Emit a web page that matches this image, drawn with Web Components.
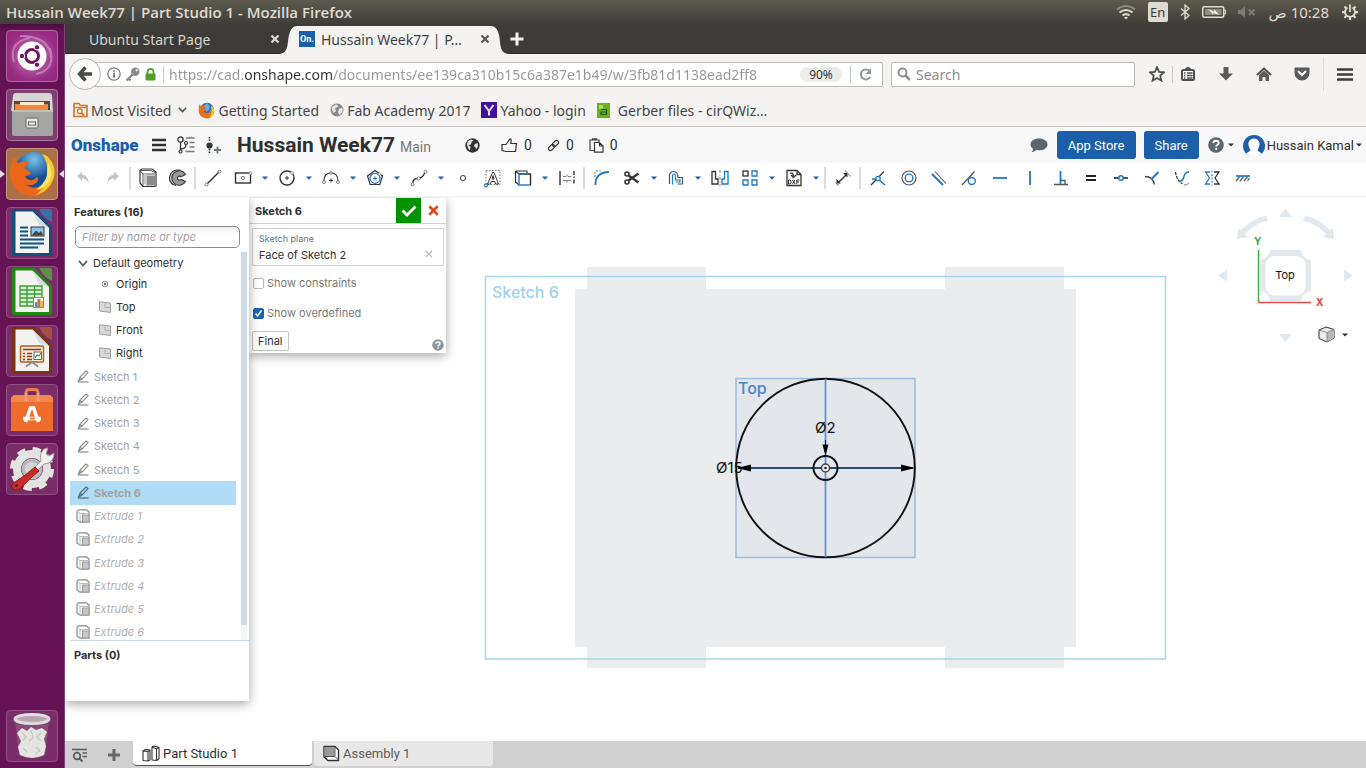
<!DOCTYPE html>
<html lang="en">
<head>
<meta charset="utf-8">
<title>Hussain Week77 | Part Studio 1</title>
<style>
html,body{margin:0;height:100%}
body{font-family:Roboto,"Liberation Sans",sans-serif;font-size:14px;color:#2f2f2f;background:#fff;overflow:hidden}
</style>
</head>
<body>
<desktop-shell></desktop-shell>
<script>
const BASE = `*{box-sizing:border-box}button,input{font:inherit;color:inherit;margin:0}
button{border:0;padding:0;background:none;display:inline-flex;align-items:center;justify-content:center}
a{color:inherit;text-decoration:none}ul{list-style:none;margin:0;padding:0}`;
function define(tag, css, html) {
  customElements.define(tag, class extends HTMLElement {
    constructor() {
      super();
      const body = typeof html === 'function' ? html(this) : html;
      this.attachShadow({mode: 'open'}).innerHTML = `<style>${BASE}${css}</style>${body}`;
    }
  });
}

/* ---------- icon set: name -> [width, height, markup] ---------- */
const D = '#333', B = '#1f78c8';
const tile = (a, b) => `<rect x=".5" y=".5" width="51" height="51" rx="3.5" fill="${a}" stroke="${b}"/>`;
const office = (c, dk, inner) => tile('#7a2d69', '#8f4f82') +
  `<path d="M8 2H28L46 20V47a2 2 0 0 1-2 2H8a2 2 0 0 1-2-2V4a2 2 0 0 1 2-2Z" fill="${dk}"/><path d="M33 2H44a2 2 0 0 1 2 2V15Q38 12 33 2Z" fill="${c}" opacity=".7"/><path d="M9.500 4.500H26.500L43 21V46H9.500Z" fill="#f3f3f2"/><path d="M26.500 4.500L43 21 33 18Z" fill="#d5dde2"/>${inner}`;
const cubeIcon = (line, face, light) => `<path d="M2 2.500 4 1H14L18 4V18L16 18.500H5L2 15Z" fill="#fff" stroke="${line}" stroke-width="1.200"/><path d="M2 2.500H13L18 5M5 18V6L2 2.500M5 6H17" fill="none" stroke="${line}" stroke-width=".8"/><path d="M8.500 7.500H18V17.500H8.500Z" fill="${face}"/><path d="M6 5.500H8L9 8V17.500L6 16Z" fill="${light}"/>`;
const ICONS = {
  wifi:[20,16,`<g fill="none" stroke-width="2"><path d="M1 5.500Q10-1.500 19 5.500" stroke="#8a887f"/><path d="M3.500 8.500Q10 3.500 16.500 8.500M6.500 11.500Q10 8.800 13.500 11.500" stroke="#dfdbd2"/></g><path d="M8 13.500Q10 12 12 13.500L10 15.500Z" fill="#dfdbd2"/>`],
  bluetooth:[10,16,`<path d="M1 4.500 9 11.500 5 15V1L9 4.500 1 11.500" fill="none" stroke="#dfdbd2" stroke-width="1.300"/>`],
  battery:[24,12,`<rect x=".75" y=".75" width="21" height="10.500" rx="1.500" fill="none" stroke="#dfdbd2" stroke-width="1.500"/><path d="M22 4h1.500v4H22" fill="none" stroke="#dfdbd2"/><rect x="3" y="3" width="16.500" height="6" fill="#8d8b82"/><path d="M6 3 12 5.500 12.500 3.500 17 9 11.500 7 11 8.500Z" fill="#f4f1ea"/>`],
  mute:[18,12,`<path d="M0 4H3L7 0V12L3 8H0Z" fill="#7e7c74"/><path d="M11 3.500 16.500 9M16.500 3.500 11 9" stroke="#7e7c74" stroke-width="1.800"/>`],
  power:[16,16,`<g stroke="#dfdbd2" fill="none"><path d="M5.500 3.600A5 5 0 1 0 10.500 3.600" stroke-width="1.800"/><path d="M8 .5V8" stroke-width="1.800"/><path d="M2.500 2.500 4.500 4.500M13.500 2.500 11.500 4.500M0 8.200H3M13 8.200H16M2.500 13.700 4.500 11.700M13.500 13.700 11.500 11.700M8 13V16" stroke-width="2.200"/></g>`],
  xtab:[10,10,`<path d="M1.500 1.500 8.500 8.500M8.500 1.500 1.500 8.500" stroke="currentColor" stroke-width="2.400"/>`],
  plus:[14,14,`<path d="M7 .5V13.500M.5 7H13.500" stroke="currentColor" stroke-width="3"/>`],
  back:[16,16,`<path d="M8.500 1.500 2.500 8 8.500 14.500M3 8H15" fill="none" stroke="#4b4b4b" stroke-width="3.400"/>`],
  info:[14,14,`<circle cx="7" cy="7" r="6.200" fill="none" stroke="#777" stroke-width="1.200"/><path d="M7 6V10.800M7 3.200V4.800" stroke="#666" stroke-width="1.600"/>`],
  key:[15,15,`<circle cx="10.300" cy="4.700" r="4.200" fill="#8b8b8b"/><circle cx="11.700" cy="3.300" r="1.100" fill="#fff"/><path d="M8.500 6.500 1.500 13.500M3.500 11.500 5.500 13.500" stroke="#8b8b8b" stroke-width="2.400"/>`],
  lock:[11,13,`<path d="M2.500 6V4a3 3 0 0 1 6 0V6" fill="none" stroke="#57a52e" stroke-width="1.800"/><rect x=".5" y="5.500" width="10" height="7" rx="1" fill="#4f9f28"/>`],
  reload:[13,13,`<path d="M10.500 3A5 5 0 1 0 11.200 9" fill="none" stroke="#8b98a3" stroke-width="1.900"/><path d="M12 .5V6H6.500Z" fill="#8b98a3"/>`],
  search:[14,14,`<circle cx="5.500" cy="5.500" r="4" fill="none" stroke="#909090" stroke-width="2"/><path d="M8.500 8.500 12.800 12.800" stroke="#909090" stroke-width="2.600"/>`],
  star:[16,16,`<path d="M8 1.200 10 5.900 15.100 6.300 11.200 9.600 12.400 14.600 8 12 3.600 14.600 4.800 9.600.9 6.300 6 5.900Z" fill="#fff" stroke="#4d4d4d" stroke-width="1.800"/>`],
  clipboard:[14,14,`<path d="M4.500 2.500 7 .5 9.500 2.500" fill="none" stroke="#4d4d4d" stroke-width="2"/><rect x="1" y="3" width="12" height="10" rx="1.500" fill="#fff" stroke="#4d4d4d" stroke-width="2"/><path d="M3 6H4.500M3 8.500H4.500M3 11H4.500M6 6H11.500M6 8.500H11.500M6 11H11.500" stroke="#4d4d4d" stroke-width="1.300"/>`],
  down:[14,14,`<path d="M4.500 0H9.500V6.500H14L7 13.500 0 6.500H4.500Z" fill="#5a5a5a"/>`],
  home:[16,14,`<path d="M1 8 8 1.500 15 8" fill="none" stroke="#4d4d4d" stroke-width="2"/><path d="M3 8 8 3.500 13 8V14H9.500V10H6.500V14H3Z" fill="#5a5a5a"/>`],
  pocket:[16,14,`<path d="M1.500.5H14.500a1 1 0 0 1 1 1V6A7.500 7.500 0 0 1 .5 6V1.500a1 1 0 0 1 1-1Z" fill="#5a5a5a"/><path d="M4.500 4.500 8 8 11.500 4.500" fill="none" stroke="#fff" stroke-width="2" stroke-linecap="round"/>`],
  burger:[16,13,`<path d="M1 1.500H15M1 6.500H15M1 11.500H15" stroke="#3c3c3c" stroke-width="2.600" stroke-linecap="round"/>`],
  folder:[15,16,`<path d="M1 14.500V1.500H6L7.500 3.500H14V14.500Z" fill="#fbe9d5" stroke="#cc7430" stroke-width="1.600"/><path d="M1 5.500H14" stroke="#cc7430" stroke-width="1.200"/><circle cx="6.800" cy="9.200" r="2.300" fill="#fff" stroke="#cc7430" stroke-width="1.300"/><path d="M8.500 11 11 13.500" stroke="#cc7430" stroke-width="1.800"/>`],
  chev:[9,6,`<path d="M.8.8 4.500 4.600 8.200.8" fill="none" stroke="#4d4d4d" stroke-width="1.500"/>`],
  fox:[17,17,`<circle cx="9" cy="7.500" r="6.800" fill="#2a6db4"/><path d="M9 1Q13 4 11 8L8 10 6 4Z" fill="#5fb1e8"/><path d="M1.500 2 3 4.500Q6 3 7.500 4L6 6.500 8.500 8 6 9.500Q8 12 11 10.500 14 8.500 13 3.500 17 6 16 11 14 16.500 8.500 16.500 1.500 16 .7 9 .5 5 1.500 2Z" fill="#e8721c"/><path d="M13 3.500Q17 6 16 11 14.500 15 11 16 15 11 13 3.500Z" fill="#f7c52c"/>`],
  globeg:[14,14,`<circle cx="7" cy="7" r="6.500" fill="#8a8a8a"/><path d="M1.500 5Q4 1.500 7 1.500L8 3.500 5 5.500 6 8 3.500 10ZM9 6 12.500 4.500 12.500 9 9.500 12 8 9Z" fill="#e9e9e9"/>`],
  yahoo:[16,16,`<rect width="16" height="16" fill="#43109b"/><path d="M3.500 3 8 9 12.500 3M8 9V13.500" fill="none" stroke="#e6e0f2" stroke-width="2"/>`],
  gerber:[13,15,`<rect x=".5" y=".5" width="12" height="14" fill="#68b21f" stroke="#888"/><path d="M2 2H6V6H2Z" fill="#a5dd57"/><path d="M4 6.500H9.500V11.500H4V9H9" fill="none" stroke="#1e5b10" stroke-width="1.200"/>`],

  menu:[14,14,`<path d="M0 2H14M0 7H14M0 12H14" stroke="#2f2f2f" stroke-width="2.600"/>`],
  tree:[18,18,`<circle cx="3.500" cy="3.500" r="2.600" fill="none" stroke="${D}" stroke-width="1.300"/><path d="M3.500 6V16M3.500 13Q9 13 9 8.500" fill="none" stroke="${D}" stroke-width="1.300"/><circle cx="9" cy="7" r="1.500" fill="none" stroke="${D}" stroke-width="1.200"/><circle cx="3.500" cy="15.500" r="1.500" fill="#fff" stroke="${D}" stroke-width="1.200"/><path d="M9 2H17.500M12.500 6.500H17.500M12.500 11H17.500M8.500 15.500H17.500" stroke="#777" stroke-width="1.500"/>`],
  insert:[15,17,`<path d="M3.500 0V5M3.500 12V17" stroke="${D}" stroke-width="1.600" stroke-dasharray="1.500 1"/><circle cx="3.500" cy="8.500" r="3.100" fill="${D}"/><path d="M11.500 9.500V16.500M8 13H15" stroke="#68747c" stroke-width="1.800"/>`],
  globe:[15,15,`<circle cx="7.500" cy="7.500" r="7.200" fill="#333"/><path d="M3 3 6 1.500 8.500 2.500 6.500 4 6 6.500 3.500 7 5.500 9 5 12.500 3 10 2 6ZM10 6 12.500 5 13 8 11.500 11 10.500 9.500 9 8Z" fill="#e8e8e8"/>`],
  thumb:[17,15,`<path d="M1 6.500H5L9 .8Q11 1 9.800 5.500H15.500L14.500 13.500H5L1 12.500Z" fill="none" stroke="#333" stroke-width="1.200"/>`],
  link:[13,13,`<g transform="rotate(-45 6.500 6.500)" fill="none" stroke="#333" stroke-width="1.200"><rect x=".2" y="4.500" width="7" height="4" rx="2"/><rect x="5.800" y="4.500" width="7" height="4" rx="2"/></g>`],
  paste:[15,15,`<path d="M5 12.500H1V2H10V4M3.500 2V.8H7.500V2" fill="none" stroke="#444" stroke-width="1.200"/><path d="M5.500 4.500H10.500L14 8V14.200H5.500ZM10.500 4.500V8H14" fill="#fff" stroke="#333" stroke-width="1.200"/>`],
  chat:[18,15,`<path d="M9 .5C14 .5 17.500 3 17.500 6.500S14 12.300 9 12.300Q7.500 12.300 6.500 12 4 14 1.500 14.200 3 12.500 3 10.800.5 9.200.5 6.500C.5 3 4 .5 9 .5Z" fill="#5c666e"/>`],
  help:[16,16,`<circle cx="8" cy="8" r="7.800" fill="#5c666e"/><path d="M5.300 6.200Q5.500 3.800 8 3.800 10.700 3.800 10.700 6 10.700 7.300 9.200 8 8.200 8.500 8.200 9.600M8.200 10.800V12.800" fill="none" stroke="#fff" stroke-width="1.900"/>`],
  helps:[12,12,`<circle cx="6" cy="6" r="5.800" fill="#8e979d"/><path d="M4 4.800Q4 3 6 3 8 3 8 4.700 8 5.700 6.900 6.200 6.100 6.600 6.100 7.400M6.100 8.200V9.600" fill="none" stroke="#fff" stroke-width="1.400"/>`],
  avatar:[22,21,`<clipPath id="c"><circle cx="11" cy="11" r="11"/></clipPath><g clip-path="url(#c)"><rect width="22" height="22" fill="#1b5faa"/><path d="M11 3.500C15 3.500 17 6.500 16.500 10 16.200 12.500 15 14 14.500 15 15 17 19 17 20 21H2C3 17 7 17 7.500 15 7 14 5.800 12.500 5.500 10 5 6.500 7 3.500 11 3.500Z" fill="#fff"/></g>`],
  caret:[6,4,`<path d="M0 .5H6L3 3.500Z" fill="#333"/>`],
  bcaret:[6,4,`<path d="M0 .5H6L3 3.800Z" fill="#1b5faa"/>`],

  undo:[20,20,`<path d="M4 8 9 3.500V6.500Q15.500 7 15.500 15.500 13.500 10.500 9 10.200V13Z" fill="#c4c7c9"/>`],
  redo:[20,20,`<path d="M16 8 11 3.500V6.500Q4.500 7 4.500 15.500 6.500 10.500 11 10.200V13Z" fill="#c4c7c9"/>`],
  extrude:[20,20,cubeIcon('#333','#8b8b8b','#c8c8c8')],
  revolve:[20,20,`<path d="M12.500 2H9A8 8 0 0 0 5 16.500L8 17.500" fill="#ddd" stroke="#333" stroke-width="1.200"/><path d="M17.500 6.500A7.300 7.300 0 1 0 17.500 13.500L13 11.500A2 2 0 1 1 13 8.800Z" fill="#999" stroke="#333" stroke-width="1.100"/>`],
  line:[20,20,`<path d="M4 16 16 4" stroke="${D}" stroke-width="1.400"/><circle cx="3.500" cy="16.500" r="1.500" fill="#fff" stroke="#777"/><circle cx="16.500" cy="3.500" r="1.500" fill="#fff" stroke="#777"/>`],
  rect:[20,20,`<rect x="2.500" y="5" width="15" height="10" fill="none" stroke="${D}" stroke-width="1.400"/><circle cx="10" cy="10" r="1.600" fill="none" stroke="#777"/><circle cx="17.500" cy="5" r="1.400" fill="#fff" stroke="#999"/>`],
  circle:[20,20,`<circle cx="10" cy="10" r="7" fill="none" stroke="${D}" stroke-width="1.400"/><path d="M10 8V12M8 10H12" stroke="${D}"/><circle cx="15" cy="5" r="1.400" fill="#fff" stroke="#999"/>`],
  arc:[20,20,`<path d="M3 13Q3 5 10 5 17 5 17 13" fill="none" stroke="${D}" stroke-width="1.200"/><path d="M10 10.500V14.500M8 12.500H12" stroke="${D}"/><circle cx="3" cy="14" r="1.500" fill="#fff" stroke="#777"/><circle cx="17" cy="14" r="1.500" fill="#fff" stroke="#777"/><circle cx="10" cy="5" r="1.300" fill="#fff" stroke="#777"/>`],
  polygon:[20,20,`<path d="M10 2.500 17.500 8 14.800 16.500H5.200L2.500 8Z" fill="none" stroke="${D}" stroke-width="1.200"/><circle cx="10" cy="10.300" r="5" fill="none" stroke="${B}" stroke-width="1.200"/><path d="M10 8.500V12.500M8 10.500H12" stroke="${B}"/><circle cx="14.500" cy="6" r="1.300" fill="#fff" stroke="#999"/>`],
  spline:[20,20,`<path d="M3.500 16Q4 10.500 8 10.500 13 11 16 4.500" fill="none" stroke="${D}" stroke-width="1.400"/><circle cx="3.500" cy="16.300" r="1.500" fill="#fff" stroke="#777"/><circle cx="9.500" cy="10.500" r="1.500" fill="#fff" stroke="#777"/><circle cx="16.500" cy="3.800" r="1.500" fill="#fff" stroke="#777"/>`],
  point:[20,20,`<circle cx="10" cy="10" r="2.500" fill="#fff" stroke="#555" stroke-width="1.100"/>`],
  text:[20,20,`<rect x="3" y="2.500" width="14" height="14" fill="none" stroke="#777" stroke-dasharray="1.500 1.500"/><path d="M4.500 16 9.500 4.500H11L15.500 16H12.500L11.800 13.500H8.200L7.500 16ZM9 11H11L10 7.500Z" fill="#fff" stroke="${D}"/><circle cx="3" cy="17.300" r="1.500" fill="#fff" stroke="${B}" stroke-width="1.200"/>`],
  use:[20,20,`<path d="M2.500 3H14V5M2.500 3V14L6 17M2.500 3 6 6" fill="none" stroke="${D}" stroke-width="1.200"/><rect x="6" y="6" width="11.500" height="11" fill="#fff" stroke="${B}" stroke-width="1.400"/><path d="M6 6H17.500V17" fill="none" stroke="${D}" stroke-width="1.200"/>`],
  constr:[20,20,`<path d="M3 3V17" stroke="${D}" stroke-width="1.400"/><path d="M17 3V17" stroke="${D}" stroke-width="1.400" stroke-dasharray="4 1.500 1.500 1.500"/><path d="M6 8.500H9M11 8.500H14M6 12.500H14" stroke="#777" stroke-width="1.200"/><path d="M10 6.500V8.500M10 12.500V14.500" stroke="#777"/>`],
  fillet:[20,20,`<path d="M3 9V3H9" fill="none" stroke="#888" stroke-dasharray="2 1.500"/><path d="M3.500 17Q3 4.500 17 4" fill="none" stroke="${B}" stroke-width="1.800"/>`],
  trim:[20,20,`<path d="M6.500 7.500 16.500 14.500M6.500 12.500 16.500 5.500" stroke="${D}" stroke-width="2.200" fill="none"/><circle cx="5" cy="6" r="2" fill="none" stroke="${D}" stroke-width="1.600"/><circle cx="5" cy="14" r="2" fill="none" stroke="${D}" stroke-width="1.600"/>`],
  offset:[20,20,`<path d="M3.500 16V7.500Q3.500 3.500 7.500 3.500 11 3.500 11.500 6.500L12 9.500H16.500V16H11.500" fill="none" stroke="#555" stroke-width="1.200"/><path d="M6.500 16.500V8Q6.500 6 8 6 9.500 6 9.500 9V12H14V14H9.500" fill="none" stroke="${B}" stroke-width="1.200"/>`],
  mirror:[20,20,`<path d="M2 3.500H5.500V11H8V16H2Z" fill="none" stroke="${D}" stroke-width="1.300"/><path d="M18 3.500H14.500V11H12V16H18Z" fill="none" stroke="${B}" stroke-width="1.300"/><path d="M10 2V18" stroke="#888" stroke-dasharray="3 1.500 1 1.500"/>`],
  pattern:[20,20,`<rect x="3" y="3" width="5" height="5" fill="none" stroke="${D}" stroke-width="1.300"/><path d="M12 3H17V8H12ZM3 12H8V17H3ZM12 12H17V17H12Z" fill="none" stroke="${B}" stroke-width="1.300"/>`],
  dxf:[20,20,`<path d="M3 17.500V2.500H13L17 6.500V17.500Z" fill="#fff" stroke="${D}" stroke-width="1.300"/><path d="M13 2.500V6.500H17M6 5.500Q9 4 9.500 8M7 7 9.500 9.500 12 7" fill="none" stroke="${D}" stroke-width="1.300"/><path d="M4.500 12H6L7 13V15L6 16H4.500ZM8.500 12 11 16M11 12 8.500 16M15.500 12H12.800V16M13 14H15" fill="none" stroke="${D}" stroke-width="1"/>`],
  dim:[20,20,`<path d="M6 14 13 7" stroke="${D}" stroke-width="1.500"/><path d="M3.500 11V15.500H8ZM14.500 9.500V5H10Z" fill="${D}"/><path d="M2.500 14.500 5.500 17.500M12 2.500 17.500 8.500" stroke="#888" stroke-width="1.100"/>`],
  coincident:[20,20,`<path d="M3 17 16 3.500" stroke="${D}" stroke-width="1.200"/><path d="M4 11H10L17 17" fill="none" stroke="${B}" stroke-width="1.500"/><circle cx="10" cy="10.500" r="2.200" fill="#fff" stroke="${B}" stroke-width="1.300"/>`],
  concentric:[20,20,`<circle cx="10" cy="10" r="7" fill="none" stroke="#555" stroke-width="1.200"/><circle cx="10" cy="10" r="3.800" fill="none" stroke="${B}" stroke-width="1.300"/>`],
  parallel:[20,20,`<path d="M3 6 14 17" stroke="${B}" stroke-width="2"/><path d="M6 3.500 17 15.500" stroke="#555" stroke-width="1.100"/>`],
  tangent:[20,20,`<path d="M3 17 15.500 3.500" stroke="#555" stroke-width="1.200"/><circle cx="12.800" cy="13" r="3.500" fill="none" stroke="${B}" stroke-width="1.400"/>`],
  horizontal:[20,20,`<path d="M3 10H17" stroke="${B}" stroke-width="1.800"/>`],
  vertical:[20,20,`<path d="M10 3V17" stroke="${B}" stroke-width="1.800"/>`],
  perp:[20,20,`<path d="M9.500 3V16" stroke="${B}" stroke-width="1.800"/><path d="M3 16.500H17M10 12.500H14V16" fill="none" stroke="#555" stroke-width="1.300"/>`],
  equal:[20,20,`<path d="M5 8H15M5 12H15" stroke="#222" stroke-width="2"/>`],
  midpoint:[20,20,`<path d="M3 10H17" stroke="${D}" stroke-width="1.700"/><circle cx="10" cy="10" r="2.200" fill="#fff" stroke="${B}" stroke-width="1.400"/>`],
  normal:[20,20,`<path d="M3 8.500Q11 8.500 12.500 16.500" fill="none" stroke="#444" stroke-width="1.300"/><path d="M9 11.500 16.500 4" stroke="${B}" stroke-width="2"/>`],
  pierce:[20,20,`<path d="M3.500 4Q4.500 12 10.500 16" fill="none" stroke="${D}" stroke-width="1.200" stroke-dasharray="3 1"/><path d="M7 13.500Q11 13 12 8.500 13 4 17 4" fill="none" stroke="${B}" stroke-width="1.500"/><path d="M12 17Q15 17.500 17 15" fill="none" stroke="#777"/>`],
  symmetric:[20,20,`<path d="M8 4H3.500L7.500 10 3.500 16H8" fill="none" stroke="${B}" stroke-width="1.300"/><path d="M12 4H17L13 10 17 16H12" fill="none" stroke="${D}" stroke-width="1.300"/><path d="M10 2.500V17.500" stroke="${B}" stroke-dasharray="2 1.500"/>`],
  fix:[20,20,`<path d="M3 8H17" stroke="${B}" stroke-width="1.700"/><path d="M3 13 6.500 9M7 13 10.500 9M11 13 14.500 9M14.500 13 16.500 10" stroke="#555" stroke-width="1.200"/>`],

  origin:[8,8,`<circle cx="4" cy="4" r="2.800" fill="none" stroke="#888"/><circle cx="4" cy="4" r="1.100" fill="#444"/>`],
  plane:[12,12,`<path d="M.5.800 11.500 2V11.500L.5 10Z" fill="#d9d9d9" stroke="#a0a0a0"/><path d="M6 1.500V6.500H11" fill="none" stroke="#b0b0b0"/>`],
  pencil:[13,13,`<path d="M1 12H11.500" stroke="currentColor" stroke-width="1.200"/><path d="M1.500 11 3 7 9 1 11 2.500 5 9ZM3 7 5 9" fill="none" stroke="currentColor" stroke-width="1.100"/>`],
  box:[14,14,`<path d="M1 2 3 .8H10.500L13 3V13L4 13.200 1 11Z" fill="#fff" stroke="#888" stroke-width="1.200"/><path d="M1 2 4 4.500V13M4 4.500H13" fill="none" stroke="#bbb"/><rect x="6.500" y="6" width="6.500" height="7" fill="#c6c6c6" stroke="#999"/>`],
  down2:[10,7,`<path d="M1 1 5 5.500 9 1" fill="none" stroke="#555" stroke-width="1.800"/>`],
  check:[16,12,`<path d="M1.500 5.500 6 10 14.500 1.500" fill="none" stroke="#fff" stroke-width="2.800"/>`],
  redx:[11,11,`<path d="M1.300 1.300 9.700 9.700M9.700 1.300 1.300 9.700" stroke="#e0481e" stroke-width="2.700"/>`],
  greyx:[8,8,`<path d="M1 1 7 7M7 1 1 7" stroke="#b8b8b8" stroke-width="1.200"/>`],
  cube:[17,17,`<path d="M1 4 8 1 16 3.500V12L9 16 1 12.500Z" fill="#e9e9e9" stroke="#333"/><path d="M9 6.500 16 3.500V12L9 16Z" fill="#b9b9b9"/><path d="M1 4 9 6.500 16 3.500M9 6.500V16" fill="none" stroke="#777" stroke-width=".8"/>`],
  manager:[16,14,`<path d="M0 1.500H15M10.500 5H15M10.500 8.500H15" stroke="#5a5a5a" stroke-width="1.600"/><circle cx="5" cy="8" r="3.300" fill="none" stroke="#5a5a5a" stroke-width="1.700"/><path d="M7.500 10.500 10.500 13.500" stroke="#5a5a5a" stroke-width="1.900"/>`],
  plusg:[12,12,`<path d="M6 0V12M0 6H12" stroke="#666" stroke-width="3"/>`],
  studio:[18,17,`<path d="M1 6 3 4.500 8 5V15L6 16 1 15.500ZM1 6 6 6.500 8 5M6 6.500V16" fill="#fff" stroke="#333" stroke-width="1.100"/><path d="M10 2 12 1 17 2.500V13.500L15 15.500 10 15ZM10 2 14.500 4 17 2.500M14.500 4V15.500" fill="#fff" stroke="#333" stroke-width="1.100"/>`],
  assembly:[17,17,`<path d="M1 1.500H12L15.500 5V15.500H5L1 12Z" fill="#fff" stroke="#333" stroke-width="1.400"/><rect x="1.500" y="2" width="10" height="9.500" fill="#999"/><path d="M12 2V11.500H1.500M12 11.500 15.500 15" fill="none" stroke="#555"/>`],

  dash:[52,52,`<defs><radialGradient id="g"><stop offset="0" stop-color="#d89bcb"/><stop offset=".6" stop-color="#a94c99"/><stop offset="1" stop-color="#962a80"/></radialGradient></defs>${tile('url(#g)','#b368a6')}<path d="M8 32Q2 12 24 8M44 18Q50 40 30 44M14 6Q44 6 45 28" fill="none" stroke="#d6a1cc" stroke-width="2" opacity=".6"/><circle cx="26" cy="26" r="14.500" fill="#fff"/><circle cx="26" cy="26" r="6.500" fill="none" stroke="#75145f" stroke-width="3"/><g fill="#75145f" stroke="#fff"><circle cx="16" cy="26" r="2.700"/><circle cx="31" cy="17.300" r="2.700"/><circle cx="31" cy="34.700" r="2.700"/></g>`],
  files:[52,52,`${tile('#80406f','#a77c9d')}<path d="M7 7Q7 4 10 4H43Q46 4 46 7L47 22H5Z" fill="#d5d5d3"/><path d="M8 12H44V22H8Z" fill="#5c4632"/><path d="M9 15H42V22H9Z" fill="#f08a3c"/><path d="M14 13H38V16H14Z" fill="#fbe8d4"/><rect x="6" y="21" width="41" height="26" rx="2" fill="#a5a5a3"/><path d="M6 22H47" stroke="#d9d9d9"/><rect x="20" y="29" width="12" height="10" rx="1" fill="#e5e5e3" stroke="#666"/><rect x="22.500" y="33" width="7" height="3" fill="#fff" stroke="#555"/>`],
  firefox:[52,52,`<defs><radialGradient id="b" cx=".5" cy=".2"><stop offset="0" stop-color="#7cc5ea"/><stop offset="1" stop-color="#174f93"/></radialGradient></defs>${tile('#aa7047','#c59d7e')}<circle cx="28" cy="23" r="19" fill="url(#b)"/><path d="M8 9 12 15Q19 12 23 14L18 20 25 25Q23 28 19 28 21 33 27 32L31 29Q34 31 30 35 25 39 20 36 27 43 36 37 44 30 42 19 42 14 39 10 50 17 48 30 44 47 26 48 6 46 4 27 4 15 8 9Z" fill="#e9661b"/><path d="M41 8Q52 19 47 32 42 44 30 47 42 38 41 24 42 14 36 6Z" fill="#f8c933"/><path d="M42 14Q48 25 43 34 38 41 30 42 38 36 41 28Z" fill="#fbe56a"/>`],
  writer:[52,52,office('#1f8dc0','#0e4f7e',`<path d="M14 20.500H22M14 24.500H22M14 28.500H22M14 32.500H38M14 36.500H38M14 40.500H32" stroke="#0f5283" stroke-width="1.800"/><rect x="25" y="20" width="13" height="9" fill="#8cc6e8" stroke="#333"/><path d="M25.500 28.500 30 23.500 33 26 35 24 37.500 28.500Z" fill="#444"/>`)],
  calc:[52,52,office('#4dbb3a','#1e8a10',`<path d="M14 20H36V40H14ZM14 24H36M14 28H36M14 32H36M14 36H36M21 20V40M28.500 20V40" fill="#dff3dc" stroke="#3a9f2e" stroke-width="1.300"/><rect x="27.500" y="31.500" width="10" height="10" fill="#fff" stroke="#888"/><path d="M29 41V36H31.500V41Z" fill="#35a0d8"/><path d="M31.500 41V33H34.500V41Z" fill="#e66b1f"/><path d="M34.500 41V35H37V41Z" fill="#f0b53c"/>`)],
  impress:[52,52,office('#b5632f','#7a330d',`<rect x="14.500" y="21" width="23" height="16" rx="1" fill="#fbe9dc" stroke="#b85a20" stroke-width="1.400"/><path d="M17 24.500H35M17 28.500H19M17 31.500H19M17 34.500H19M21 28.500H26M21 31.500H26M21 34.500H26" stroke="#8b3d10" stroke-width="1.500"/><rect x="28" y="27" width="7.500" height="7.500" fill="#fff" stroke="#666"/><path d="M29 33 31 30 33 31 35 28" fill="none" stroke="#3aa32f" stroke-width="1.300"/><path d="M20 41.500 26 37 32 41.500" fill="none" stroke="#888" stroke-width="1.700"/>`)],
  store:[52,52,`${tile('#7a2d69','#8f4f82')}<path d="M20 17V9Q20 5.500 23 5.500H29Q32 5.500 32 9V17" fill="none" stroke="#e6834f" stroke-width="3"/><path d="M5 14 8 11H44L47 14V47H5Z" fill="#ee6c2c"/><path d="M5 14 8 11H44L47 14V18H5Z" fill="#f4864e"/><path d="M20 17V9M32 17V9" stroke="#eba27d" stroke-width="2.500"/><path d="M19.500 38 24.500 24H27.500L32.500 38" fill="none" stroke="#fff" stroke-width="3.600"/><path d="M17 34.500H35" stroke="#fff" stroke-width="3.500"/><path d="M24 34.500H29" stroke="#ee6c2c" stroke-width="1.500"/>`],
  tools:[52,52,`${tile('#7a2d69','#8f4f82')}<circle cx="26" cy="26" r="15" fill="none" stroke="#e3e3e1" stroke-width="8"/><circle cx="26" cy="26" r="19.500" fill="none" stroke="#e3e3e1" stroke-width="5" stroke-dasharray="8.200 7.110"/><circle cx="26" cy="26" r="10.500" fill="#b9b9b8"/><circle cx="26" cy="26" r="7" fill="#d5d5d3"/><path d="M29 24 35 18Q33 11 38 6L42 5 40 11 43 13 48 10Q48 17 43 20L38 21 32 27Z" fill="#f2f2f1" stroke="#999"/><path d="M29 24 33 28Q24 35 15 45 10 49 7 46 4 42 9 39 19 33 29 24Z" fill="#cc2b2b" stroke="#8e1818"/><circle cx="10.500" cy="42.500" r="1.500" fill="#6b1111"/>`],
  trash:[52,52,`${tile('#7a2d69','#8f4f82')}<path d="M9 10H43L39 45Q26 51 13 45Z" fill="#8b4a7c"/><path d="M11 23 16 18 21 21 25 17 30 20 36 18 41 22 38 29 40 36 38 45Q26 51 14 45L12 37 15 31Z" fill="#e4e4e1"/><path d="M16 22 20 27 17 30M25 20 27 28 23 31M35 23 31 27 35 31M17 38 21 42M30 37 34 41 29 44" fill="none" stroke="#c4c4be" stroke-width="1.200"/><ellipse cx="26" cy="9" rx="17" ry="4.500" fill="#b9a5b5" stroke="#dededb" stroke-width="3"/>`]
};
class UiIcon extends HTMLElement {
  constructor() {
    super();
    const [w, h, body] = ICONS[this.getAttribute('name')];
    this.attachShadow({mode: 'open'}).innerHTML =
      `<style>:host{display:inline-flex;flex:none}svg{display:block}</style><svg width="${w}" height="${h}" viewBox="0 0 ${w} ${h}" aria-hidden="true">${body}</svg>`;
  }
}
customElements.define('ui-icon', UiIcon);
const ic = n => `<ui-icon name="${n}"></ui-icon>`;

/* ---------- desktop ---------- */
define('top-panel', `
:host{display:flex;align-items:center;height:24px;padding:0 8px 0 6px;background:linear-gradient(#5d5a4f,#3f3e39);color:#dfdbd2;font:15px "Noto Sans","DejaVu Sans",sans-serif}
h1{flex:1;margin:0;font:600 15px "Open Sans","Noto Sans",sans-serif}
.tray{display:flex;align-items:center;gap:12px}
.lang{width:20px;height:20px;border-radius:2px;background:#dfdbd2;color:#3c3b37;font-size:13px;line-height:20px;text-align:center}
time{padding:0 1px}`,
`<h1>Hussain Week77 | Part Studio 1 - Mozilla Firefox</h1>
<div class="tray">${ic('wifi')}<span class="lang">En</span>${ic('bluetooth')}${ic('battery')}${ic('mute')}<time dir="rtl">10:28 ص</time>${ic('power')}</div>`);

define('dock-tile', `
:host{display:block;position:relative;height:52px}
button{width:52px;height:52px}
:host([running])::before,:host([running])::after{content:"";position:absolute;top:22px;border:4px solid transparent}
:host([running])::before{left:-6px;border-left:5px solid #e6dce3;border-right:0}
:host([running])::after{right:-6px;border-right:5px solid #e6dce3;border-left:0}`,
el => `<button aria-label="${el.getAttribute('label')}">${ic(el.getAttribute('icon'))}</button>`);

define('app-dock', `
:host{display:flex;flex-direction:column;gap:7px;padding:6px 6px;background:linear-gradient(#4d0b40,#651354 8px);border-right:1px solid #84407a}
dock-tile:last-child{margin-top:auto}`,
`<dock-tile icon="dash" label="Search"></dock-tile><dock-tile icon="files" label="Files"></dock-tile>
<dock-tile icon="firefox" label="Firefox" running></dock-tile><dock-tile icon="writer" label="Writer"></dock-tile>
<dock-tile icon="calc" label="Calc"></dock-tile><dock-tile icon="impress" label="Impress"></dock-tile>
<dock-tile icon="store" label="Software"></dock-tile><dock-tile icon="tools" label="Settings"></dock-tile>
<dock-tile icon="trash" label="Trash"></dock-tile>`);

/* ---------- browser ---------- */
define('browser-tabs', `
:host{display:flex;height:30px;background:#3c3b37;color:#d8d5cd;font:14px "Noto Sans",sans-serif;border-bottom:1px solid #2b2a27}
.tab{display:flex;align-items:center;height:30px;min-width:0}
.idle{width:232px;padding:0 17px 0 24px}
.live{position:relative;width:194px;margin:2px 0 0;height:28px;padding:0 1px 2px 2px;background:#f4f3f2;color:#3f3f3f}
.live svg{position:absolute;top:0;fill:#f4f3f2}
.l{left:-18px}.r{right:-18px}
.tab span{flex:1;white-space:nowrap}
.fav{flex:none;width:16px;height:16px;margin-right:6px;background:#1b5faa;color:#fff;font:bold 9px/16px Roboto,sans-serif;text-align:center}
.live button{margin-left:12px;color:#5a5a5a}
.new{margin-left:19px;color:#f2f2f2}
nav{display:flex}`,
`<nav aria-label="Tabs"><div class="tab idle"><span>Ubuntu Start Page</span><button aria-label="Close tab">${ic('xtab')}</button></div>
<div class="tab live"><svg class="l" width="18" height="28"><path d="M18 0V28H0C10 27 8 18 10 9Q12 0 18 0Z"/></svg><b class="fav">On.</b><span>Hussain Week77 | P…</span><button aria-label="Close tab">${ic('xtab')}</button><svg class="r" width="18" height="28"><path d="M0 0V28H18C8 27 10 18 8 9Q6 0 0 0Z"/></svg></div></nav>
<button class="new" aria-label="New tab">${ic('plus')}</button>`);

define('nav-bar', `
:host{display:flex;align-items:center;height:40px;padding:0 6px 0 4px;background:#f4f3f2;color:#333;font:14px "Noto Sans",sans-serif}
.back{position:relative;z-index:1;width:32px;height:32px;border-radius:16px;background:#fbfbfa;border:1px solid #bbb8b4;margin-right:-16px}
form{display:flex;align-items:center;height:25px;background:#fff;border:1px solid #bdbab6;border-radius:2px;margin:0}
.url{flex:1;min-width:0;padding:0 10px 0 21px;margin-right:8px}
.url ui-icon:nth-of-type(2){margin-left:4px}.url ui-icon:nth-of-type(3){margin:0 7px 0 5px}
i{width:1px;height:17px;background:#c9c9c9}
input{border:0;outline:0;background:none;padding:0;min-width:0;height:22px}
.addr{flex:1;margin:0 21px 0 5px;-webkit-text-fill-color:transparent;background:linear-gradient(90deg,#969696 75px,#333 75px 164px,#969696 164px);-webkit-background-clip:text;background-clip:text}
.zoom{width:42px;height:15px;border-radius:8px;background:#ececeb;font-size:12px;line-height:15px;text-align:center;margin:0 8px 0 0}
.rl{margin-left:8px}
.find{flex:none;width:244px;padding:0 5px;gap:5px;margin-right:14px}
.find input{flex:1}.find input::placeholder{color:#8c8c8c;opacity:1}
.acts{display:flex;align-items:center}
.acts button{width:38px;height:26px}.acts .s{width:16px;margin-right:7px}.acts .c{width:30px;margin-right:4px}
.acts .sep{height:34px;margin:0 6px 0 2px;background:#dcdad8}
.acts .m{width:30px}`,
`<button class="back" aria-label="Back">${ic('back')}</button>
<form class="url">${ic('info')}${ic('key')}${ic('lock')}<i></i><input class="addr" aria-label="Address" value="https://cad.onshape.com/documents/ee139ca310b15c6a387e1b49/w/3fb81d1138ead2ff8"><span class="zoom">90%</span><i></i><button class="rl" type="button" aria-label="Reload">${ic('reload')}</button></form>
<form class="find">${ic('search')}<input aria-label="Search" placeholder="Search"></form>
<div class="acts"><button class="s" aria-label="Bookmark">${ic('star')}</button><i></i><button class="c" aria-label="Bookmarks list">${ic('clipboard')}</button><button aria-label="Downloads">${ic('down')}</button><button aria-label="Home">${ic('home')}</button><button aria-label="Pocket">${ic('pocket')}</button><i class="sep"></i><button class="m" aria-label="Menu">${ic('burger')}</button></div>`);

define('bookmarks-bar', `
:host{display:flex;align-items:center;height:33px;padding:0 8px;background:#f4f3f2;border-bottom:1px solid #c6c2be;color:#444;font:14px "Noto Sans",sans-serif}
a{display:flex;align-items:center;gap:3px;white-space:nowrap}
nav{display:flex;gap:11px}.wide{gap:8px}
.open ui-icon:last-child{margin-left:4px}`,
`<nav><a class="open" href="#">${ic('folder')}Most Visited ${ic('chev')}</a><a href="#">${ic('fox')}Getting Started</a><a href="#">${ic('globeg')}Fab Academy 2017</a><a href="#">${ic('yahoo')}Yahoo - login</a><a class="wide" href="#">${ic('gerber')}Gerber files - cirQWiz…</a></nav>`);

/* ---------- document header and sketch toolbar ---------- */
define('doc-header', `
:host{display:flex;align-items:center;height:36px;padding:0 4px 0 6px;background:#f8f8f8}
.logo{width:81px;color:#1b5faa;font:900 17px Roboto,sans-serif}
.b{margin-right:11px}
h2{margin:0 5px 0 5px;font:bold 21px Roboto,sans-serif;color:#2f2f2f;white-space:nowrap}
.main{color:#777;font-size:14px;padding-top:4px}
.stats{display:flex;align-items:center;gap:15px;margin-left:34px}
.stats button{gap:6px;height:20px}.stats .g{margin-right:6px}
.right{display:flex;align-items:center;margin-left:auto;font-size:13px}
.pri{height:28px;padding:0 11px;border-radius:3px;background:#1b5faa;color:#fff;margin-right:8px}
.chat{margin-right:9px}.help{gap:4px;margin:0 9px 0 1px}.user{gap:2px;white-space:nowrap}`,
`<a class="logo" href="#">Onshape</a><button class="b" aria-label="Menu">${ic('menu')}</button><button class="b" aria-label="Versions">${ic('tree')}</button><button class="b" aria-label="Create version">${ic('insert')}</button>
<h2>Hussain Week77</h2><span class="main">Main</span>
<div class="stats"><button class="g" aria-label="Public">${ic('globe')}</button><button>${ic('thumb')}0</button><button>${ic('link')}0</button><button>${ic('paste')}0</button></div>
<div class="right"><button class="chat" aria-label="Comments">${ic('chat')}</button><button class="pri">App Store</button><button class="pri">Share</button><button class="help" aria-label="Help">${ic('help')}${ic('caret')}</button><button class="user">${ic('avatar')}Hussain Kamal${ic('caret')}</button></div>`);

define('tool-button', `
:host{display:flex;height:30px}
button{width:30px}.m{width:14px}
:host([fluid]){flex:1}:host([fluid]) button{width:100%}`,
el => `<button aria-label="${el.getAttribute('icon')}">${ic(el.getAttribute('icon'))}</button>` +
  (el.hasAttribute('menu') ? `<button class="m" aria-label="More">${ic('bcaret')}</button>` : ''));

const tools = s => s.split(' ').map(t => t === '|' ? '<i></i>' :
  t.endsWith('+') ? `<tool-button icon="${t.slice(0, -1)}" menu></tool-button>` : `<tool-button icon="${t}"></tool-button>`).join('');
define('sketch-toolbar', `
:host{display:flex;align-items:center;height:34px;padding:0 3px 4px;background:#fff;border-bottom:1px solid #f1f1f1}
i{width:2px;height:22px;margin:0 2px 0 1px;background:#dcdcdc}
.rel{display:flex;width:395px}`,
`${tools('undo redo | extrude revolve | line rect+ circle+ arc+ polygon+ spline+ point text use+ constr | fillet trim+ offset+ mirror pattern+ dxf+ | dim |')}
<div class="rel">${'coincident concentric parallel tangent horizontal vertical perp equal midpoint normal pierce symmetric fix'.split(' ').map(n => `<tool-button icon="${n}" fluid></tool-button>`).join('')}</div>`);

/* ---------- workspace ---------- */
define('feature-row', `
:host{display:flex;align-items:center;padding-left:7px;margin-right:5px;gap:4px;color:#2f2f2f}
:host([plane]){padding-left:29px;gap:5px}
:host([sketch]){color:#a3a3a3}
:host([sketch]) ui-icon{color:#888}
:host([solid]){color:#b0b0b0;font-style:italic;padding-left:6px}
:host([active]){background:#b0dcf5;font-weight:bold}
:host([active]) ui-icon{color:#4a6a7c}
:host([dot]) ui-icon{padding:0 2px}`,
el => `${ic(el.getAttribute('icon'))}<slot></slot>`);

const rows = [
  '<feature-row icon="origin" plane dot>Origin</feature-row>',
  ...['Top','Front','Right'].map(n => `<feature-row icon="plane" plane>${n}</feature-row>`),
  ...[1,2,3,4,5,6].map(n => `<feature-row icon="pencil" sketch${n === 6 ? ' active' : ''}>Sketch ${n}</feature-row>`),
  ...[1,2,3,4,5,6].map(n => `<feature-row icon="box" solid>Extrude ${n}</feature-row>`)].join('');
define('feature-panel', `
:host{display:flex;flex-direction:column;width:184px;height:504px;background:#fff;box-shadow:0 3px 10px rgba(0,0,0,.35);font:11px Inter,sans-serif}
h3{margin:0;font:bold 11px/16px Inter,sans-serif}
.f{margin:7px 9px 6px}
input{width:165px;height:22px;margin:0 10px;padding:0 6px;border:1px solid #8c8c8c;border-radius:5px;background:linear-gradient(#f0f0f0,#fff 8px);font-style:italic;outline:0}
input::placeholder{color:#a0a0a0;opacity:1}
.scroll{display:flex;height:389px;margin:4px 0 0 5px;border-bottom:1px solid #cddbe6;overflow:hidden}
.list{flex:1}
.root{display:flex;align-items:center;gap:5px;height:20px;padding:2px 0 0 8px}
.rows{display:grid;grid-auto-rows:1fr;height:372px}
.bar{width:6px;margin-right:2px;background:#f3f6f8}
.bar b{display:block;height:373px;background:#cddbe6}
.p{margin:6px 9px}`,
`<h3 class="f">Features (16)</h3><input aria-label="Filter" placeholder="Filter by name or type">
<div class="scroll"><div class="list"><div class="root">${ic('down2')}Default geometry</div><div class="rows">${rows}</div></div><div class="bar"><b></b></div></div>
<h3 class="p">Parts (0)</h3>`);

define('sketch-dialog', `
:host{display:block;width:197px;background:#fff;box-shadow:0 3px 10px rgba(0,0,0,.35);font:11px Inter,sans-serif;color:#2f2f2f}
header{display:flex;align-items:center;height:26px;border-bottom:1px solid #d3d3d3}
h3{flex:1;margin:0 6px;font:bold 11px Inter,sans-serif}
.ok{width:25px;height:25px;background:#009200}.no{width:25px;height:25px}
.field{display:flex;align-items:center;margin:4px 2px 0 3px;height:38px;border:1px solid #d0d0d0;border-radius:1px;padding:0 10px 0 6px}
.field div{flex:1}.field small{display:block;font-size:9px;line-height:16px;color:#6d757b}.field span{display:block;line-height:16px}
.field button{margin-top:14px}
label{display:flex;align-items:center;gap:3px;height:30px;margin-left:4px;color:#7a7a7a}
.cs{padding-top:2px}
input{appearance:none;width:11px;height:11px;border:1px solid #b9b9b9;border-radius:2px;background:#fff}
input:checked{border-color:#1b64b5;background:#1b64b5 url("data:image/svg+xml,%3Csvg xmlns='http://www.w3.org/2000/svg' viewBox='0 0 9 9'%3E%3Cpath d='M1.500 4.500 3.500 7 7.500 1.500' fill='none' stroke='white' stroke-width='1.500'/%3E%3C/svg%3E") center/9px no-repeat}
footer{display:flex;align-items:flex-end;justify-content:space-between;padding:3px 2px 2px 3px}
.fin{height:20px;padding:0 5px;border:1px solid #c2c2c2;border-radius:2px}`,
`<header><h3>Sketch 6</h3><button class="ok" aria-label="Accept">${ic('check')}</button><button class="no" aria-label="Cancel">${ic('redx')}</button></header>
<div class="field"><div><small>Sketch plane</small><span>Face of Sketch 2</span></div><button aria-label="Clear">${ic('greyx')}</button></div>
<div class="cs"><label><input type="checkbox">Show constraints</label><label><input type="checkbox" checked>Show overdefined</label></div>
<footer><button class="fin">Final</button><button aria-label="Help">${ic('helps')}</button></footer>`);

define('sketch-canvas', `
:host{display:block}svg{display:block;width:100%;height:100%}`,
`<svg viewBox="65 197 1301 544" font-family="Inter,sans-serif" role="img" aria-label="Sketch">
<path d="M587 267H706V289H945V267H1064V289H1076V647H1064V668H945V647H706V668H587V647H575V289H587Z" fill="#ebecee"/>
<rect x="485.500" y="276.500" width="680" height="382.500" fill="none" stroke="#a6d5ec" stroke-width="1.500"/>
<text x="492" y="298" font-size="16" font-weight="500" fill="#9dd2ee">Sketch 6</text>
<rect x="736" y="378.500" width="179" height="179" fill="#e3e6eb" stroke="#9dbcde" stroke-width="1.500"/>
<text x="738" y="394" font-size="16" font-weight="500" fill="#4a84c8">Top</text>
<circle cx="825.500" cy="468" r="89.300" fill="none" stroke="#111" stroke-width="1.900"/>
<path d="M825.500 379V557" stroke="#5b8fca" stroke-width="1.700"/>
<path d="M738 468H913" stroke="#2d4a6b" stroke-width="1.900"/>
<circle cx="825.500" cy="468" r="12" fill="none" stroke="#111" stroke-width="1.900"/>
<circle cx="825.500" cy="468" r="4" fill="#eee" stroke="#444" stroke-width="1.500"/><circle cx="825.500" cy="468" r="1.300" fill="#222"/>
<path d="M825.500 440V446" stroke="#111"/><path d="M822.500 444.500H828.500L825.500 456ZM737 468 751 464.500V471.500ZM915 468 901 464.500V471.500Z" fill="#000"/>
<text x="716" y="473" font-size="15" fill="#111">Ø15</text><text x="815" y="433" font-size="15" fill="#111">Ø2</text>
</svg>`);

define('view-cube', `
:host{display:block;width:140px}
svg{display:block}
.d{display:flex;gap:7px;margin:-19px 7px 0 auto;position:relative}`,
`<svg width="140" height="140" viewBox="1215 205 140 140" font-family="Inter,sans-serif" role="img" aria-label="View cube">
<g fill="#e1e9ef"><path d="M1285.500 208.500 1292 217H1279ZM1285.500 342 1279 334H1292ZM1218 275.500 1227 269.500V281.500ZM1353 275.500 1344 269.500V281.500Z"/><path d="M1237 239 1238 228 1241 230Q1252 219 1266 215.500L1268 220.500Q1254 224 1245 234L1248 237ZM1334 239 1333 228 1330 230Q1319 219 1305 215.500L1303 220.500Q1317 224 1326 234L1323 237Z"/><path d="M1270 250H1301Q1302 259 1311 260V291Q1302 292 1301 301H1270Q1269 292 1260 291V260Q1269 259 1270 250Z"/></g>
<rect x="1265.500" y="256" width="40" height="39.500" rx="9" fill="#fff"/>
<path d="M1258.500 250V302.500" stroke="#3bb34a" stroke-width="1.500"/><path d="M1258 302.500H1311" stroke="#e34d4d" stroke-width="1.500"/>
<text x="1285" y="279" font-size="11" text-anchor="middle" fill="#111">Top</text><text x="1254" y="245" font-size="10" font-weight="bold" fill="#2fae3c">Y</text><text x="1316" y="306" font-size="10" font-weight="bold" fill="#e03a3a">X</text></svg>
<button class="d" aria-label="View options">${ic('cube')}${ic('caret')}</button>`);

define('work-space', `
:host{display:block;position:relative;flex:1;min-height:0;overflow:hidden;background:#fff}
sketch-canvas{height:100%}
feature-panel{position:absolute;left:0;top:0}
sketch-dialog{position:absolute;left:184px;top:1px}
view-cube{position:absolute;right:11px;top:8px}`,
`<sketch-canvas></sketch-canvas><sketch-dialog></sketch-dialog><feature-panel></feature-panel><view-cube></view-cube>`);

define('studio-tabs', `
:host{display:flex;height:27px;background:#d0d0d0;font-size:13px}
.i{width:34px;padding-right:4px}
.t{width:179px;height:25px;margin-right:2px;justify-content:flex-start;gap:3px;padding-left:9px;background:#e8e8e8;color:#5c5c5c;border-radius:0 0 4px 4px}
.on{background:#fff;color:#2f2f2f;border-bottom:1px solid #1b5faa}`,
`<button class="i" aria-label="Tab manager">${ic('manager')}</button><button class="i" aria-label="Add tab">${ic('plusg')}</button>
<button class="t on">${ic('studio')}Part Studio 1</button><button class="t">${ic('assembly')}Assembly 1</button>`);

define('desktop-shell', `
:host{display:flex;flex-direction:column;height:100vh}
.row{display:flex;flex:1;min-height:0}
app-dock{width:65px;flex:none}
main{display:flex;flex-direction:column;flex:1;min-width:0}
main>*{flex-shrink:0}work-space{flex-shrink:1}`,
`<top-panel></top-panel><div class="row"><app-dock></app-dock><main><browser-tabs></browser-tabs><nav-bar></nav-bar><bookmarks-bar></bookmarks-bar><doc-header></doc-header><sketch-toolbar></sketch-toolbar><work-space></work-space><studio-tabs></studio-tabs></main></div>`);
</script>
</body>
</html>
